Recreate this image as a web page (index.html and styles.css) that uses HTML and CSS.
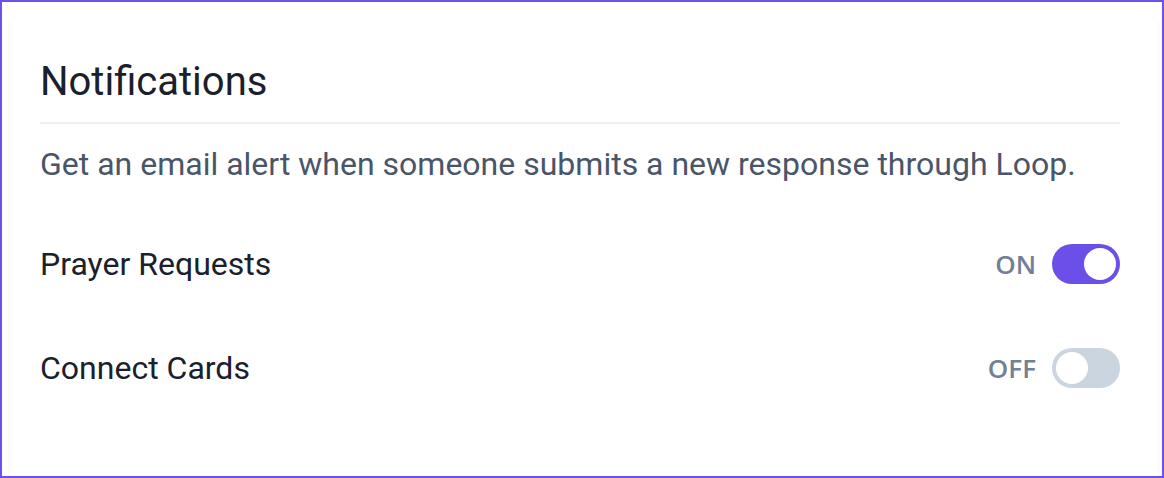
FILE: index.html
```html
<!DOCTYPE html>
<html lang="en">
<head>
  <meta charset="UTF-8">
  <meta name="viewport" content="width=device-width, initial-scale=1.0">
  <title>Notifications</title>
  <link rel="stylesheet" href="styles.css">
</head>
<body>
  <div class="frame">
    <div class="card">
      <h2 class="title">Notifications</h2>
      <p class="description">Get an email alert when someone submits a new response through Loop.</p>

      <div class="setting">
        <span class="setting-label">Prayer Requests</span>
        <div class="setting-control">
          <span class="state">ON</span>
          <button class="toggle on" onclick="flip(this)"><span class="knob"></span></button>
        </div>
      </div>

      <div class="setting">
        <span class="setting-label">Connect Cards</span>
        <div class="setting-control">
          <span class="state">OFF</span>
          <button class="toggle" onclick="flip(this)"><span class="knob"></span></button>
        </div>
      </div>
    </div>
  </div>

  <script>
    function flip(btn) {
      btn.classList.toggle('on');
      btn.previousElementSibling.innerText = btn.classList.contains('on') ? 'ON' : 'OFF';
    }
  </script>
</body>
</html>
```

FILE: styles.css
```css
html, body {
  margin: 0;
  height: 100%;
}

body {
  font-family: 'Roboto', 'Liberation Sans', sans-serif;
  background-color: #fff;
}

.frame {
  box-sizing: border-box;
  height: 100%;
  border: 2px solid #6e51ea;
  padding: 14px 4px 0 8px;
  overflow: hidden;
}

.card {
  background-color: #fff;
  border-radius: 10px;
  box-shadow: 0px 1px 3px rgba(0, 0, 0, 0.08);
  padding: 42px 38px 40px 30px;
  min-height: 480px;
}

.title {
  margin: 0;
  font-size: 40px;
  font-weight: 400;
  line-height: 48px;
  color: #1a202c;
  padding-bottom: 16px;
  border-bottom: 2px solid #edf0f4;
}

.description {
  margin: 20px 0 60px;
  font-size: 32px;
  line-height: 40px;
  color: #4a5568;
}

.setting {
  display: flex;
  justify-content: space-between;
  align-items: center;
  margin-bottom: 64px;
}

.setting-label {
  font-size: 32px;
  color: #1a202c;
}

.setting-control {
  display: flex;
  align-items: center;
  gap: 16px;
}

.state {
  font-size: 26px;
  font-weight: 600;
  color: #718096;
  font-family: 'Open Sans', 'Noto Sans', sans-serif;
}

.toggle {
  width: 68px;
  height: 40px;
  padding: 4px;
  border: none;
  border-radius: 20px;
  background-color: #cbd5e0;
  cursor: pointer;
  display: flex;
  justify-content: flex-start;
}

.toggle.on {
  background-color: #6c4fe9;
  justify-content: flex-end;
}

.knob {
  width: 32px;
  height: 32px;
  border-radius: 50%;
  background-color: #fff;
}
```
